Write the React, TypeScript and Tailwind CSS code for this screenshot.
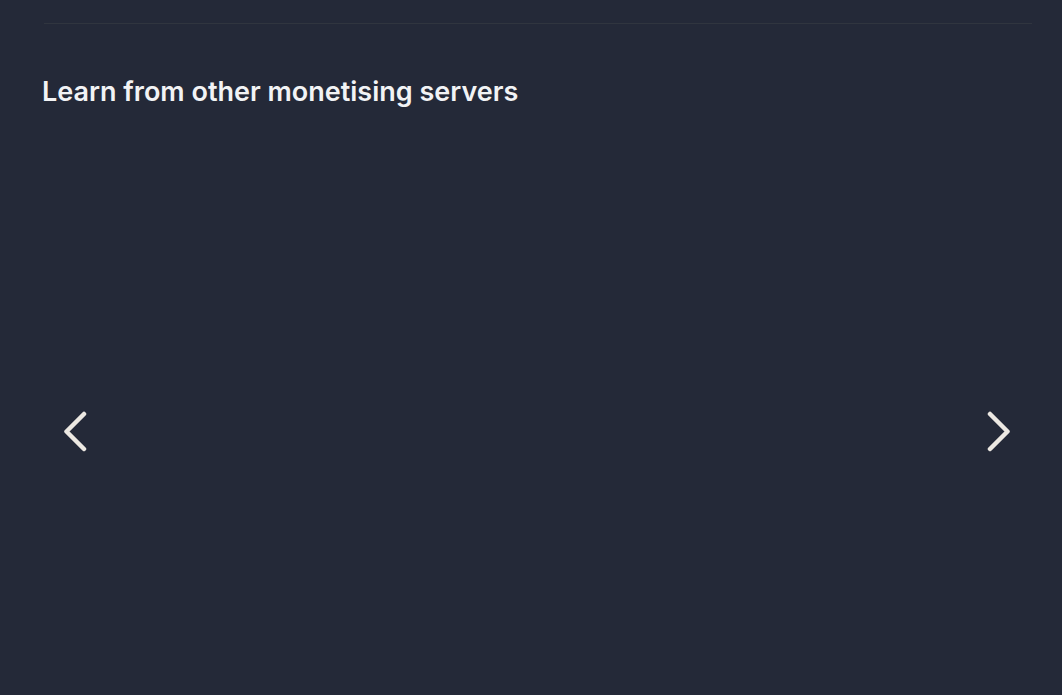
import React from "react";

function Chevron({ dir }: { dir: "left" | "right" }) {
  const d = dir === "left" ? "M22 3 L4.5 20.5 L22 38" : "M3 3 L20.5 20.5 L3 38";
  return (
    <svg width="25" height="41" viewBox="0 0 25 41" fill="none">
      <path d={d} stroke="#ece8e2" strokeWidth="4.5" strokeLinecap="round" strokeLinejoin="round" />
    </svg>
  );
}

export default function App() {
  return (
    <div className="min-h-screen w-full bg-[#242938] overflow-hidden" style={{ fontFamily: "Inter, 'Noto Sans', sans-serif" }}>
      <div className="px-[42px] pt-[23px]">
        <div className="h-px bg-[#30353f] mr-[-12px] ml-[2px]" />
        <h2 className="mt-[51px] text-[27px] leading-[34px] font-semibold text-[#f2f3f5]">
          Learn from other monetising servers
        </h2>
        <div className="mt-[20px] h-[540px] flex items-start justify-between">
          <button className="mt-[281px] ml-[19px] w-[26px] h-[42px] flex items-center justify-center">
            <Chevron dir="left" />
          </button>
          <button className="mt-[281px] mr-[8px] w-[26px] h-[42px] flex items-center justify-center">
            <Chevron dir="right" />
          </button>
        </div>
      </div>
    </div>
  );
}
